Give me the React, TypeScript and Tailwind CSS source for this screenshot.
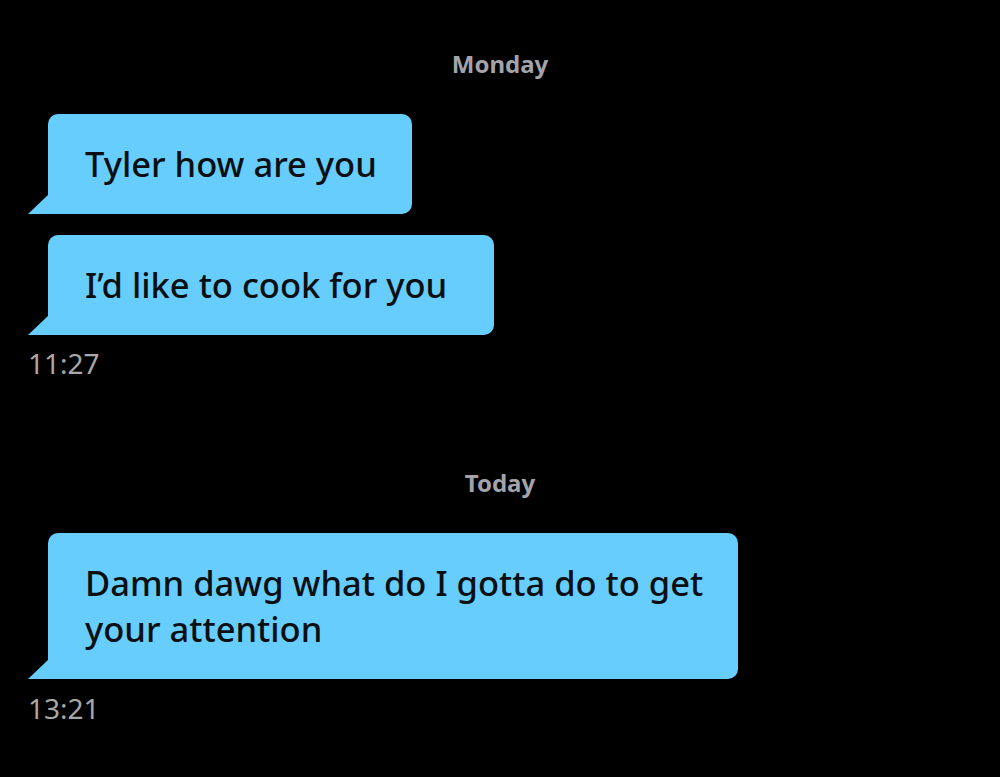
import React from 'react';

const Tail = () => (
  <svg className="absolute -left-[20px] bottom-0" width="21" height="20" viewBox="0 0 21 20">
    <polygon points="0,20 21,20 21,0" fill="#66cdfd" />
  </svg>
);

const Bubble = ({ text, width }: { text: React.ReactNode; width: string }) => (
  <div className={`relative ml-[48px] ${width} rounded-[10px] rounded-bl-none bg-[#66cdfd] pl-[37px] pr-[30px] py-[27px] text-[34.5px] font-medium leading-[46px] text-[#0b0f12]`}>
    <Tail />
    {text}
  </div>
);

export default function App() {
  return (
    <div className="h-[777px] w-[1000px] overflow-hidden bg-black pt-[48px] font-['Noto_Sans',sans-serif]">
      <div className="text-center text-[24px] font-bold leading-[32px] text-[#a3a3ab]">Monday</div>

      <div className="mt-[34px] flex flex-col gap-[21px]">
        <Bubble width="w-[364px]" text="Tyler how are you" />
        <Bubble width="w-[446px]" text="I’d like to cook for you" />
      </div>
      <div className="ml-[28px] mt-[12px] text-[28px] leading-[32px] text-[#a8a8a8]">11:27</div>

      <div className="mt-[88px] text-center text-[24px] font-bold leading-[32px] text-[#a3a3ab]">Today</div>

      <div className="mt-[34px]">
        <Bubble width="w-[690px]" text="Damn dawg what do I gotta do to get your attention" />
      </div>
      <div className="ml-[28px] mt-[13px] text-[28px] leading-[32px] text-[#a8a8a8]">13:21</div>
    </div>
  );
}
